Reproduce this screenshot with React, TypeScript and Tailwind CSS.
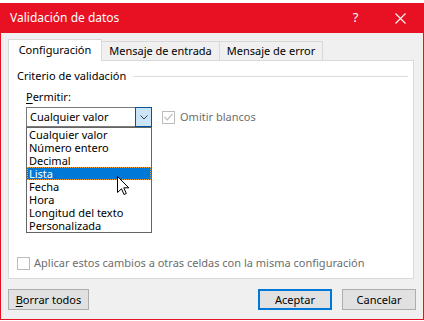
const items = [
  "Cualquier valor",
  "Número entero",
  "Decimal",
  "Lista",
  "Fecha",
  "Hora",
  "Longitud del texto",
  "Personalizada",
];

export default function App() {
  return (
    <div className="w-[424px] h-[321px] bg-white pt-[3px] font-['Noto_Sans',sans-serif] text-[11px] text-black">
      <div className="w-[424px] h-[317px] border border-[#e81123] bg-[#f0f0f0] flex flex-col">
        {/* title bar */}
        <div className="h-[29px] shrink-0 bg-[#e81123] flex items-center text-white text-[12px]">
          <span className="flex-1 pl-[9px] pb-[2px]">Validación de datos</span>
          <div className="w-[45px] h-full flex items-center justify-center pb-[2px] text-[13px]">?</div>
          <div className="w-[45px] h-full flex items-center justify-center pb-[1px]">
            <svg width="11" height="11" viewBox="0 0 11 11">
              <path d="M0.5 0.5L10.5 10.5M10.5 0.5L0.5 10.5" stroke="white" strokeWidth="1.1" />
            </svg>
          </div>
        </div>

        <div className="flex-1 flex flex-col px-[7px] pb-[8px]">
          {/* tabs */}
          <div className="mt-[6px] h-[21px] flex items-end">
            <div className="relative z-10 w-[94px] h-[22px] -mb-px bg-white border border-b-0 border-[#d9d9d9] flex items-center justify-center pb-[1px]">
              Configuración
            </div>
            <div className="w-[118px] h-[19px] border border-l-0 border-b-0 border-[#d9d9d9] flex items-center justify-center">
              Mensaje de entrada
            </div>
            <div className="w-[103px] h-[19px] border border-l-0 border-b-0 border-[#d9d9d9] flex items-center justify-center">
              Mensaje de error
            </div>
          </div>

          {/* panel */}
          <div className="relative mr-[2px] h-[219px] bg-white border border-[#d9d9d9] flex flex-col">
            <div className="mt-[7px] h-[16px] flex items-center pl-[8px] pr-[5px]">
              <span>Criterio de validación</span>
              <div className="ml-[7px] flex-1 h-px bg-[#dcdcdc]" />
            </div>
            <div className="mt-[5px] ml-[17px] h-[16px] leading-[16px]">
              <span className="underline underline-offset-2">P</span>ermitir:
            </div>
            <div className="mt-[2px] ml-[17px] h-[20px] flex items-center">
              <div className="w-[126px] h-[20px] flex">
                <div className="flex-1 border border-r-0 border-[#7a7a7a] bg-white pl-[3px] leading-[18px]">
                  Cualquier valor
                </div>
                <div className="w-[17px] h-full border border-[#005499] bg-[#cce4f7] flex items-center justify-center">
                  <svg width="8" height="5" viewBox="0 0 8 5">
                    <path d="M0.5 0.5L4 4L7.5 0.5" fill="none" stroke="#3c3c3c" strokeWidth="1" />
                  </svg>
                </div>
              </div>
              <div className="ml-[10px] w-[13px] h-[13px] border border-[#bcbcbc] bg-white flex items-center justify-center">
                <svg width="9" height="8" viewBox="0 0 9 8">
                  <path d="M0.5 4L3.3 6.8L8.5 0.8" fill="none" stroke="#bcbcbc" strokeWidth="1.2" />
                </svg>
              </div>
              <span className="ml-[5px] text-[#6d6d6d]">Omitir blancos</span>
            </div>

            {/* open dropdown list */}
            <div className="absolute left-[17px] top-[66px] z-20 w-[126px] h-[106px] border border-[#646464] bg-white">
              {items.map((item) =>
                item === "Lista" ? (
                  <div
                    key={item}
                    className="h-[13px] leading-[11px] pl-[1px] bg-[#0078d7] text-white border border-dotted border-[#f0a030]"
                  >
                    {item}
                  </div>
                ) : (
                  <div key={item} className="h-[13px] leading-[13px] pl-[2px]">
                    {item}
                  </div>
                )
              )}
            </div>

            {/* mouse pointer */}
            <svg className="absolute left-[108px] top-[115px] z-30" width="13" height="20" viewBox="0 0 13 20">
              <path
                d="M0.5 0.5L0.5 16.5L4.5 12.8L7 18.5L9.3 17.5L6.8 11.8L11.8 11.8Z"
                fill="white"
                stroke="black"
                strokeWidth="1"
                strokeLinejoin="miter"
              />
            </svg>

            <div className="mt-auto mb-[7px] ml-[8px] h-[16px] flex items-center">
              <div className="w-[13px] h-[13px] border border-[#bcbcbc] bg-white" />
              <span className="ml-[4px] text-[#6d6d6d]">
                Aplicar estos cambios a otras celdas con la misma configuración
              </span>
            </div>
          </div>

          {/* buttons */}
          <div className="mt-[10px] h-[21px] flex">
            <button className="w-[81px] h-full bg-[#e1e1e1] border border-[#adadad] leading-none">
              <span className="underline underline-offset-2">B</span>orrar todos
            </button>
            <button className="ml-auto w-[74px] h-full bg-[#e1e1e1] border-2 border-[#0078d7] leading-none">
              Aceptar
            </button>
            <button className="ml-[10px] w-[74px] h-full bg-[#e1e1e1] border border-[#adadad] leading-none">
              Cancelar
            </button>
          </div>
        </div>
      </div>
    </div>
  );
}
